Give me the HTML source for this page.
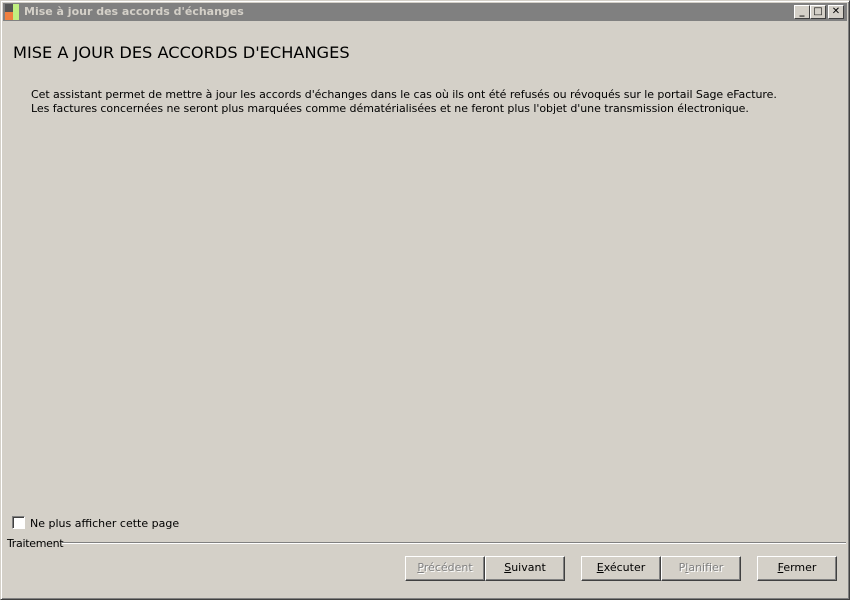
<!DOCTYPE html>
<html><head><meta charset="utf-8"><style>
*{margin:0;padding:0;box-sizing:border-box}
body{width:850px;height:600px;background:#d4d0c8;font-family:"DejaVu Sans","Liberation Sans",sans-serif;font-size:11px;color:#000;position:relative;overflow:hidden}
.win{position:absolute;left:0;top:0;width:850px;height:600px;border:1px solid;border-color:#d4d0c8 #404040 #404040 #d4d0c8;box-shadow:inset 1px 1px 0 #fff,inset -1px -1px 0 #808080}
.tb{position:absolute;left:3px;top:3px;width:844px;height:18px;background:#808080;color:#d4d0c8;font-weight:bold;font-size:11px;line-height:18px;padding-left:21px}
.ic{position:absolute;top:4px;width:16px;height:16px}
.cb{position:absolute;top:5px;width:16px;height:14px;background:#d4d0c8;border:1px solid;border-color:#fff #404040 #404040 #fff;font-size:10px;line-height:12px;text-align:center;font-weight:bold;color:#000}
.h{position:absolute;left:13px;top:43px;font-size:16.2px;font-family:"DejaVu Sans",sans-serif;letter-spacing:0px}
.p{position:absolute;left:31px;top:88px;line-height:14px;font-size:11px;letter-spacing:-0.055px}
.chk{position:absolute;left:12px;top:516px;width:13px;height:13px;background:#fff;border:1px solid;border-color:#808080 #fff #fff #808080;box-shadow:inset 1px 1px 0 #404040}
.btn{position:absolute;top:556px;width:80px;height:25px;border:1px solid;border-color:#fff #404040 #404040 #fff;box-shadow:inset -1px -1px 0 #808080;text-align:center;line-height:22px;font-size:11px}
.dis{color:#808080;text-shadow:1px 1px 0 #fff}
</style></head><body>
<div class="win"></div>
<div class="tb">Mise à jour des accords d'échanges</div>
<div class="ic" style="left:5px"><div style="position:absolute;left:0;top:0;width:8px;height:8px;background:#555"></div><div style="position:absolute;left:0;top:8px;width:8px;height:8px;background:#f08040"></div><div style="position:absolute;left:8px;top:0;width:6px;height:16px;background:#c0f080"></div></div>
<div class="cb" style="left:794px">_</div>
<div class="cb" style="left:810px">□</div>
<div class="cb" style="left:828px">✕</div>
<div class="h">MISE A JOUR DES ACCORDS D'ECHANGES</div>
<div class="p">Cet assistant permet de mettre à jour les accords d'échanges dans le cas où ils ont été refusés ou révoqués sur le portail Sage eFacture.<br>Les factures concernées ne seront plus marquées comme dématérialisées et ne feront plus l'objet d'une transmission électronique.</div>
<div class="chk"></div>
<div style="position:absolute;left:30px;top:517px">Ne plus afficher cette page</div>
<div style="position:absolute;left:7px;top:537px;letter-spacing:-0.3px">Traitement</div>
<div style="position:absolute;left:62px;top:542px;width:784px;height:2px;border-top:1px solid #808080;border-bottom:1px solid #fff"></div>
<div class="btn dis" style="left:405px"><u>P</u>récédent</div>
<div class="btn" style="left:485px"><u>S</u>uivant</div>
<div class="btn" style="left:581px"><u>E</u>xécuter</div>
<div class="btn dis" style="left:661px">P<u>l</u>anifier</div>
<div class="btn" style="left:757px"><u>F</u>ermer</div>
</body></html>
